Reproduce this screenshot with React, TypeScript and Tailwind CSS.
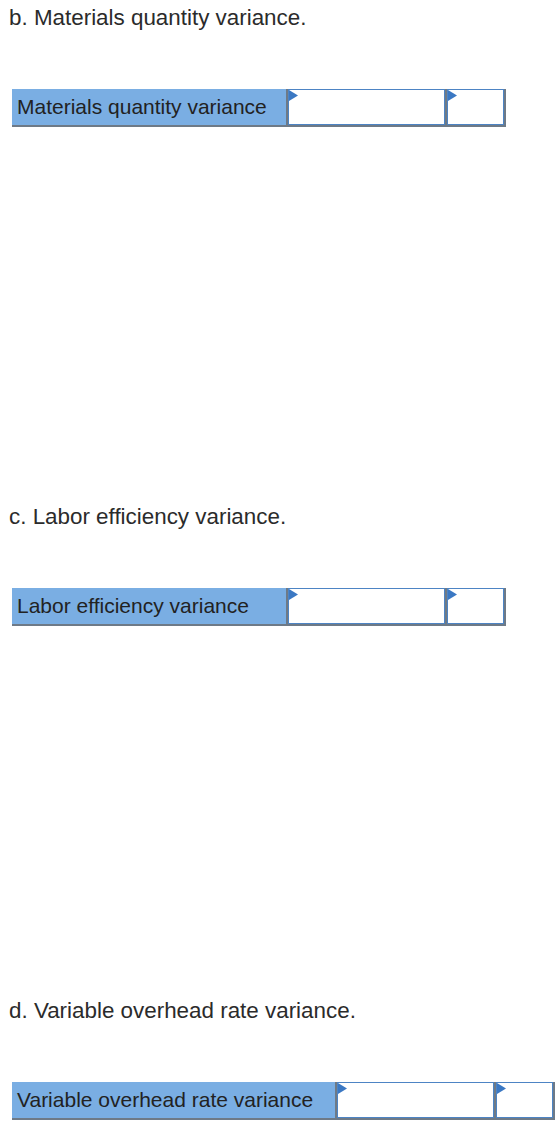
import React from 'react'

type Part = {
  heading: string
  label: string
  labelWidth: string
  gapAfter: string
}

const parts: Part[] = [
  { heading: 'b. Materials quantity variance.', label: 'Materials quantity variance', labelWidth: 'w-[274px]', gapAfter: 'mb-[376px]' },
  { heading: 'c. Labor efficiency variance.', label: 'Labor efficiency variance', labelWidth: 'w-[274px]', gapAfter: 'mb-[371px]' },
  { heading: 'd. Variable overhead rate variance.', label: 'Variable overhead rate variance', labelWidth: 'w-[323px]', gapAfter: 'mb-0' },
]

// little blue pennant in the corner of an answer cell
function Flag() {
  return (
    <svg className="absolute left-0 top-0" width="9" height="11" viewBox="0 0 9 11">
      <path d="M0 0 L9 5.5 L0 11 Z" fill="#3b78c3" />
    </svg>
  )
}

function AnswerCell({ width, last }: { width: string; last?: boolean }) {
  return (
    <div className={`flex border-l-2 border-[#6e7a87] ${last ? 'border-r-2' : ''}`}>
      <div className={`relative h-full ${width} border border-[#4d84c4] bg-white`}>
        <Flag />
      </div>
    </div>
  )
}

export default function App() {
  return (
    <div className="min-h-[1129px] bg-white pt-[4px] font-['Liberation_Sans',Arial,sans-serif] text-[#222]">
      {parts.map((p) => (
        <section key={p.heading} className={p.gapAfter}>
          <h2 className="pl-[9px] text-[22.4px] leading-[28px] text-[#2b2b2b]">{p.heading}</h2>
          <div className="mt-[57px] ml-[12px] flex h-[38px] w-fit border-b-2 border-[#6e7a87]">
            <div className={`${p.labelWidth} flex items-center bg-[#7aaee3] pl-[5px] text-[21px]`}>
              {p.label}
            </div>
            <AnswerCell width="w-[157px]" />
            <AnswerCell width="w-[57px]" last />
          </div>
        </section>
      ))}
    </div>
  )
}
